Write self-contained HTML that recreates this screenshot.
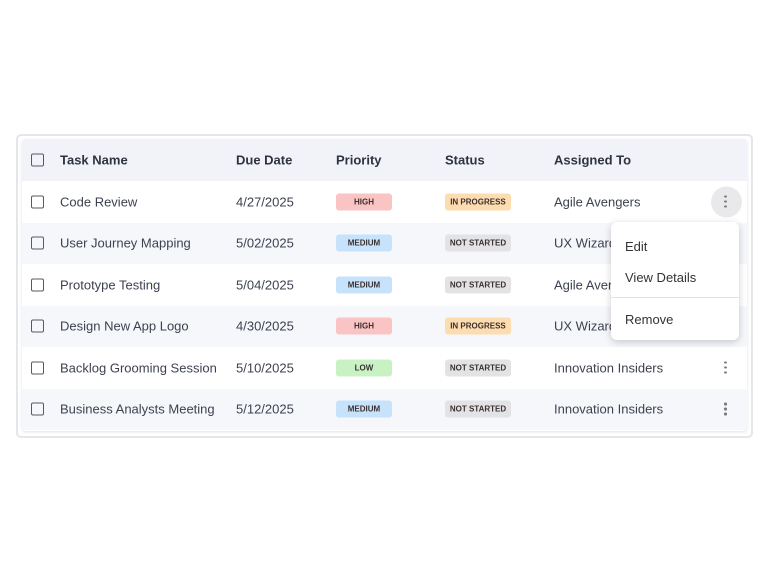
<!DOCTYPE html>
<html><head><style>
*{margin:0;padding:0;box-sizing:border-box}
body{width:768px;height:573px;background:#fff;font-family:"Liberation Sans",sans-serif;position:relative;overflow:hidden}
.outer{position:absolute;left:16px;top:134px;width:737px;height:304px;border:2px solid #e4e6ea;border-radius:5px}
.tbl{position:absolute;left:22px;top:139px;width:725px;height:292px;border-radius:4px;overflow:hidden;box-shadow:0 1px 3px rgba(0,0,0,.12)}
.row{position:absolute;left:0;width:725px;height:41.5px;font-size:13px;color:#3d4250}
.row>*{position:absolute;top:50%;transform:translateY(-50%)}
.hd{background:#f1f3f8;font-weight:bold;color:#2e3340}
.cb{left:9px;width:13px;height:13px;border:1.6px solid #555a66;border-radius:2px}
.c1{left:38px}.c2{left:214px}.c3{left:314px}.c4{left:423px}.c5{left:532px}
.b{font-size:8px;font-weight:bold;height:17px;line-height:17px;border-radius:3px;text-align:center;color:#3a3030}
.p{width:56px}.s{width:66px}
.high{background:#fbc4c4}.med{background:#c6e3fb}.low{background:#c8f2c4}
.ip{background:#fddcb0}.ns{background:#e3e3e5}
.k{left:700px;width:3px;height:13px}
.k i{display:block;width:2.6px;height:2.6px;border-radius:50%;background:#7a7a7e;margin:0 0 2.4px}
.menu{position:absolute;left:611px;top:222px;width:128px;height:118px;background:#fff;border-radius:6px;box-shadow:0 2px 8px rgba(0,0,0,.2);font-size:13px;color:#333}
.menu div{position:absolute;left:14px}
</style></head><body>
<div class="outer"></div>
<div class="tbl">
<div class="row hd" style="top:0;height:42px"><span class="cb"></span><span class="c1">Task Name</span><span class="c2">Due Date</span><span class="c3">Priority</span><span class="c4">Status</span><span class="c5">Assigned To</span></div>
<div class="row" style="top:42px;background:#fff"><span class="cb"></span><span class="c1">Code Review</span><span class="c2">4/27/2025</span><span class="c3 b p high">HIGH</span><span class="c4 b s ip">IN PROGRESS</span><span class="c5">Agile Avengers</span><span style="left:689px;width:31px;height:31px;border-radius:50%;background:#e9e9eb"></span><span class="k" style="left:702px"><i></i><i></i><i></i></span></div>
<div class="row" style="top:83.5px;background:#f5f7fb"><span class="cb"></span><span class="c1">User Journey Mapping</span><span class="c2">5/02/2025</span><span class="c3 b p med">MEDIUM</span><span class="c4 b s ns">NOT STARTED</span><span class="c5">UX Wizards</span></div>
<div class="row" style="top:125px;background:#fff"><span class="cb"></span><span class="c1">Prototype Testing</span><span class="c2">5/04/2025</span><span class="c3 b p med">MEDIUM</span><span class="c4 b s ns">NOT STARTED</span><span class="c5">Agile Avengers</span></div>
<div class="row" style="top:166.5px;background:#f5f7fb"><span class="cb"></span><span class="c1">Design New App Logo</span><span class="c2">4/30/2025</span><span class="c3 b p high">HIGH</span><span class="c4 b s ip">IN PROGRESS</span><span class="c5">UX Wizards</span></div>
<div class="row" style="top:208px;background:#fff"><span class="cb"></span><span class="c1">Backlog Grooming Session</span><span class="c2">5/10/2025</span><span class="c3 b p low">LOW</span><span class="c4 b s ns">NOT STARTED</span><span class="c5">Innovation Insiders</span><span class="k" style="left:702px"><i></i><i></i><i></i></span></div>
<div class="row" style="top:249.5px;background:#f5f7fb"><span class="cb"></span><span class="c1">Business Analysts Meeting</span><span class="c2">5/12/2025</span><span class="c3 b p med">MEDIUM</span><span class="c4 b s ns">NOT STARTED</span><span class="c5">Innovation Insiders</span><span class="k" style="left:702px"><i></i><i></i><i></i></span></div>
</div>
<div class="menu">
<div style="top:17px">Edit</div>
<div style="top:48px">View Details</div>
<div style="top:75px;left:0;width:128px;height:1px;background:#e2e2e4"></div>
<div style="top:90px">Remove</div>
</div>
</body></html>
